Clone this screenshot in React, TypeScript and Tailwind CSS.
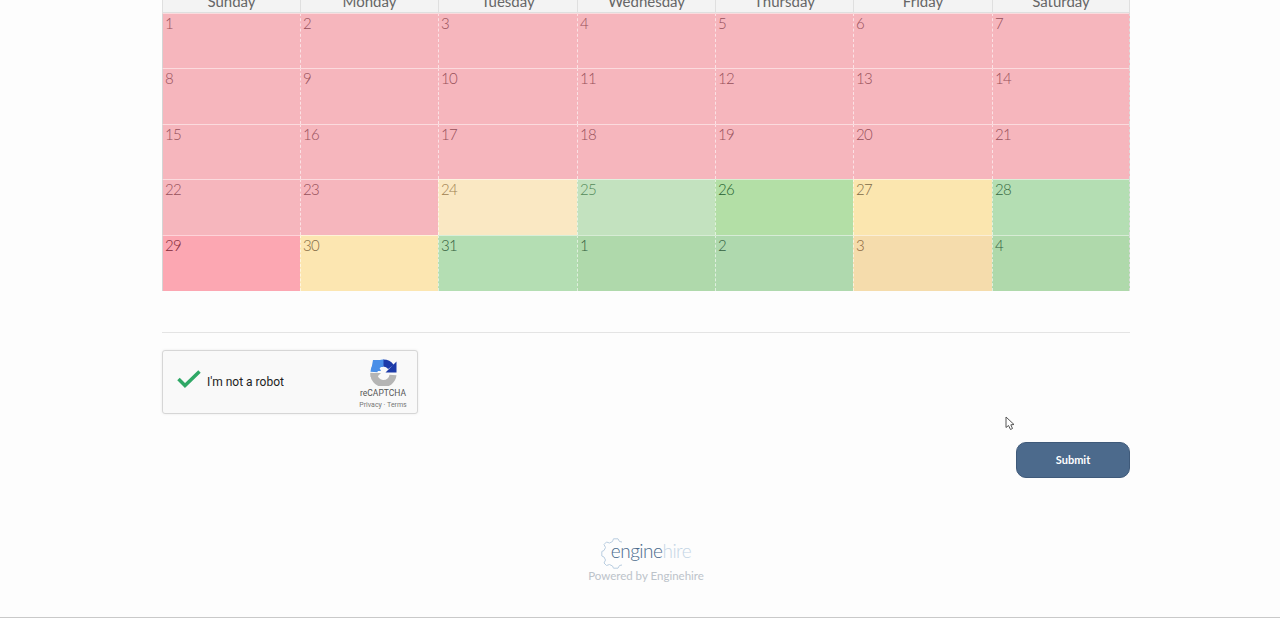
const days = ["Sunday", "Monday", "Tuesday", "Wednesday", "Thursday", "Friday", "Saturday"];

const pink = "bg-[#f6b6bd] text-[#97505a]";

const cells = [
  ...Array.from({ length: 23 }, (_, i) => ({ n: i + 1, c: pink })),
  { n: 24, c: "bg-[#fae8c3] text-[#a08050]" },
  { n: 25, c: "bg-[#c3e2bf] text-[#558a5a]" },
  { n: 26, c: "bg-[#b3dfa6] text-[#245f2e]" },
  { n: 27, c: "bg-[#fbe6af] text-[#806a46]" },
  { n: 28, c: "bg-[#b4deb3] text-[#35683f]" },
  { n: 29, c: "bg-[#fca7b2] text-[#822a38]" },
  { n: 30, c: "bg-[#fce6b1] text-[#856c46]" },
  { n: 31, c: "bg-[#b4deb3] text-[#33603e]" },
  { n: 1, c: "bg-[#afd9ab] text-[#33603e]" },
  { n: 2, c: "bg-[#afd9ae] text-[#33603e]" },
  { n: 3, c: "bg-[#f5dcac] text-[#8c6640]" },
  { n: 4, c: "bg-[#afd9ab] text-[#33603e]" },
];

function RecaptchaIcon() {
  return (
    <svg width="27" height="27" viewBox="0 0 27 27" fill="none">
      {/* grey lower arc */}
      <path d="M4 14 A9.5 9.5 0 0 0 23 16" stroke="#b5b5b5" strokeWidth="7" />
      <path d="M0.5 14 L11 14 L7 18 L0.5 18 Z" fill="#b5b5b5" />
      {/* dark blue upper right */}
      <path d="M13 4 A9.5 9.5 0 0 1 21 8" stroke="#1c3aa9" strokeWidth="7" />
      <path d="M26.5 2.5 L26.5 13.5 L15.5 13.5 Z" fill="#1c3aa9" />
      {/* light blue upper left */}
      <path d="M13.5 4 A9.5 9.5 0 0 0 4 13" stroke="#4a8fe8" strokeWidth="7" />
      <path d="M3 1 L13 1 L13 8 L9 8 L11 12 L1 12 Z" fill="#4a8fe8" />
    </svg>
  );
}

function GearOutline() {
  return (
    <svg width="24" height="31" viewBox="0 0 24 31" fill="none" stroke="#b9cde0" strokeWidth="1">
      <path d="M21 4 L18.5 3.5 L17 0.8 L12.5 0.8 L11.5 3.5 L8.5 5 L5.5 4 L3 6.5 L4.5 9.5 L3 12.5 L0.8 13.5 L0.8 18 L3 19 L4.5 22 L3 25 L5.5 27.5 L8.5 26.5 L11.5 28 L12.5 30.2 L17 30.2 L18.5 27.5 L21 27" />
    </svg>
  );
}

export default function App() {
  return (
    <div className="relative h-[618px] overflow-hidden bg-[#fdfdfd] border-b border-[#c9c9c9]" style={{ fontFamily: "Lato, 'Noto Sans', sans-serif" }}>
      <div className="ml-[162px] w-[968px] -mt-[8px]">
        {/* Calendar */}
        <div className="grid grid-cols-[138px_138px_139px_138px_138px_139px_138px]">
          {days.map((d, i) => (
            <div key={d} className={`h-[20.8px] bg-[#f3f3f3] border-l border-b border-[#dfdfdf] text-center text-[15px] leading-[19px] text-[#666] ${i === 6 ? "border-r" : ""}`}>
              {d}
            </div>
          ))}
          {cells.map((cell, i) => (
            <div
              key={i}
              className={`h-[55.55px] border-t border-t-white/50 pl-[2px] pt-0 text-[15px] font-light leading-[19px] tracking-[-0.8px] ${cell.c} ${i % 7 === 0 ? "border-l border-l-[#d4d4d4]" : "border-l border-dashed border-l-white/60"} ${i % 7 === 6 ? "border-r border-r-[#dcdcdc]" : ""}`}
              style={{ borderTopStyle: "solid" }}
            >
              {cell.n}
            </div>
          ))}
        </div>

        <div className="mt-[41.5px] h-px bg-[#e4e4e4]" />

        {/* Captcha */}
        <div className="mt-[17px] flex h-[64px] w-[256px] items-center rounded-[3px] border border-[#d6d6d6] bg-[#f9f9f9] shadow-[0_0_3px_rgba(0,0,0,0.08)]">
          <svg className="ml-[14px] -mt-[6px]" width="24" height="18" viewBox="0 0 24 18" fill="none">
            <path d="M1.5 9 L8 15.5 L22.5 1.5" stroke="#2fa866" strokeWidth="3.5" />
          </svg>
          <span className="ml-[6px] text-[12px] text-[#222]" style={{ fontFamily: "Roboto, sans-serif" }}>I'm not a robot</span>
          <div className="ml-auto mr-[9px] mt-[4px] flex w-[50px] flex-col items-center" style={{ fontFamily: "Roboto, sans-serif" }}>
            <RecaptchaIcon />
            <span className="mt-[2px] text-[8.5px] leading-[11px] text-[#555]">reCAPTCHA</span>
            <span className="mt-[1px] whitespace-nowrap text-[7px] leading-[10px] text-[#777]">Privacy · Terms</span>
          </div>
        </div>

        {/* Submit */}
        <div className="mt-[28px] flex justify-end">
          <button className="h-[36px] w-[114px] rounded-[10px] border border-[#3f5a7a] bg-[#4c6a8c] text-[11px] font-bold text-white">
            Submit
          </button>
        </div>

        {/* Footer */}
        <div className="mt-[60px] flex flex-col items-center">
          <div className="relative flex h-[31px] items-center pb-[4px] pl-[10px]">
            <div className="absolute left-0 top-0">
              <GearOutline />
            </div>
            <span className="text-[19px] font-light tracking-[-0.5px] text-[#4a6a8c]">engine</span>
            <span className="text-[19px] font-light tracking-[-0.5px] text-[#c5d6e6]">hire</span>
          </div>
          <div className="-mt-[1px] text-[11.5px] leading-[16px] text-[#bcc3ca]">Powered by Enginehire</div>
        </div>
      </div>

      {/* Mouse pointer */}
      <svg className="absolute left-[1005px] top-[416px]" width="11" height="15" viewBox="0 0 11 15" fill="#fff" stroke="#555" strokeWidth="1">
        <path d="M1 1 L1 11.5 L3.5 9.5 L5.5 13.5 L7.5 12.5 L5.8 8.8 L9 8.5 Z" />
      </svg>
    </div>
  );
}
